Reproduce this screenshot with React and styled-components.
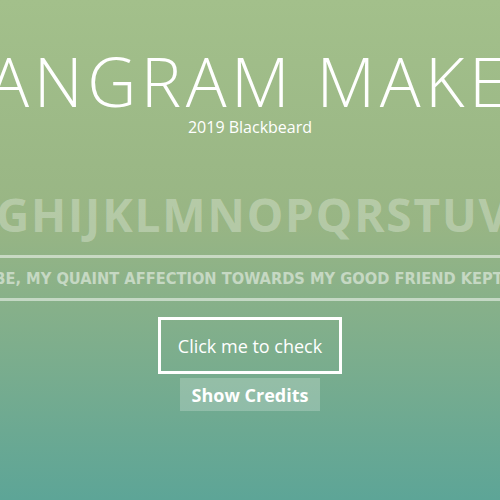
import React from "react";
import styled, { createGlobalStyle } from "styled-components";

const GlobalStyle = createGlobalStyle`
  html, body {
    margin: 0;
    padding: 0;
  }
  body {
    font-family: "Open Sans", "Liberation Sans", sans-serif;
    background: #5ca596;
  }
`;

const Page = styled.div`
  width: 500px;
  height: 500px;
  overflow: hidden;
  display: flex;
  flex-direction: column;
  align-items: center;
  background: linear-gradient(to bottom, #a3c08b 0%, #98b584 45%, #5da597 100%);
  color: #fff;
`;

const Title = styled.h1`
  margin: 47px 0 0;
  font-size: 68px;
  font-weight: 300;
  line-height: 1;
  white-space: nowrap;
  letter-spacing: 4.5px;
`;

const Byline = styled.div`
  margin-top: 4px;
  font-size: 16px;
  line-height: 1;
`;

const Alphabet = styled.div`
  margin-top: 56px;
  padding-right: 44px;
  font-size: 46px;
  font-weight: 700;
  line-height: 1;
  letter-spacing: 1.8px;
  white-space: nowrap;
  color: rgba(255, 255, 255, 0.3);
`;

const QuoteBar = styled.div`
  align-self: stretch;
  display: flex;
  justify-content: center;
  margin-top: 18px;
  padding: 13px 0 11px;
  border-top: 3px solid rgba(255, 255, 255, 0.5);
  border-bottom: 3px solid rgba(255, 255, 255, 0.5);
`;

const Quote = styled.span`
  padding-right: 10px;
  font-family: "DejaVu Sans Condensed", "DejaVu Sans", sans-serif;
  font-weight: 700;
  font-size: 16.3px;
  line-height: 1;
  white-space: nowrap;
  color: rgba(255, 255, 255, 0.5);
`;

const CheckButton = styled.button`
  margin-top: 16px;
  padding: 0 17px;
  height: 57px;
  background: transparent;
  border: 3px solid #fff;
  color: #fff;
  font-family: "Open Sans", sans-serif;
  font-size: 18px;
  cursor: pointer;
`;

const CreditsButton = styled.button`
  margin-top: 4px;
  height: 33px;
  padding: 0 12px;
  border: none;
  background: rgba(255, 255, 255, 0.22);
  color: #fff;
  font-family: "Open Sans", sans-serif;
  font-weight: 700;
  font-size: 18px;
  cursor: pointer;
`;

const ALPHABET = "ABCDEFGHIJKLMNOPQRSTUVWXYZ";
const QUOTE =
  "HOW COULD I DESCRIBE, MY QUAINT AFFECTION TOWARDS MY GOOD FRIEND KEPT ZEALOUS AND JOLLY";

export default function App() {
  return (
    <>
      <GlobalStyle />
      <Page>
        <Title>PANGRAM MAKER</Title>
        <Byline>2019 Blackbeard</Byline>
        <Alphabet>{ALPHABET}</Alphabet>
        <QuoteBar>
          <Quote>{QUOTE}</Quote>
        </QuoteBar>
        <CheckButton>Click me to check</CheckButton>
        <CreditsButton>Show Credits</CreditsButton>
      </Page>
    </>
  );
}
